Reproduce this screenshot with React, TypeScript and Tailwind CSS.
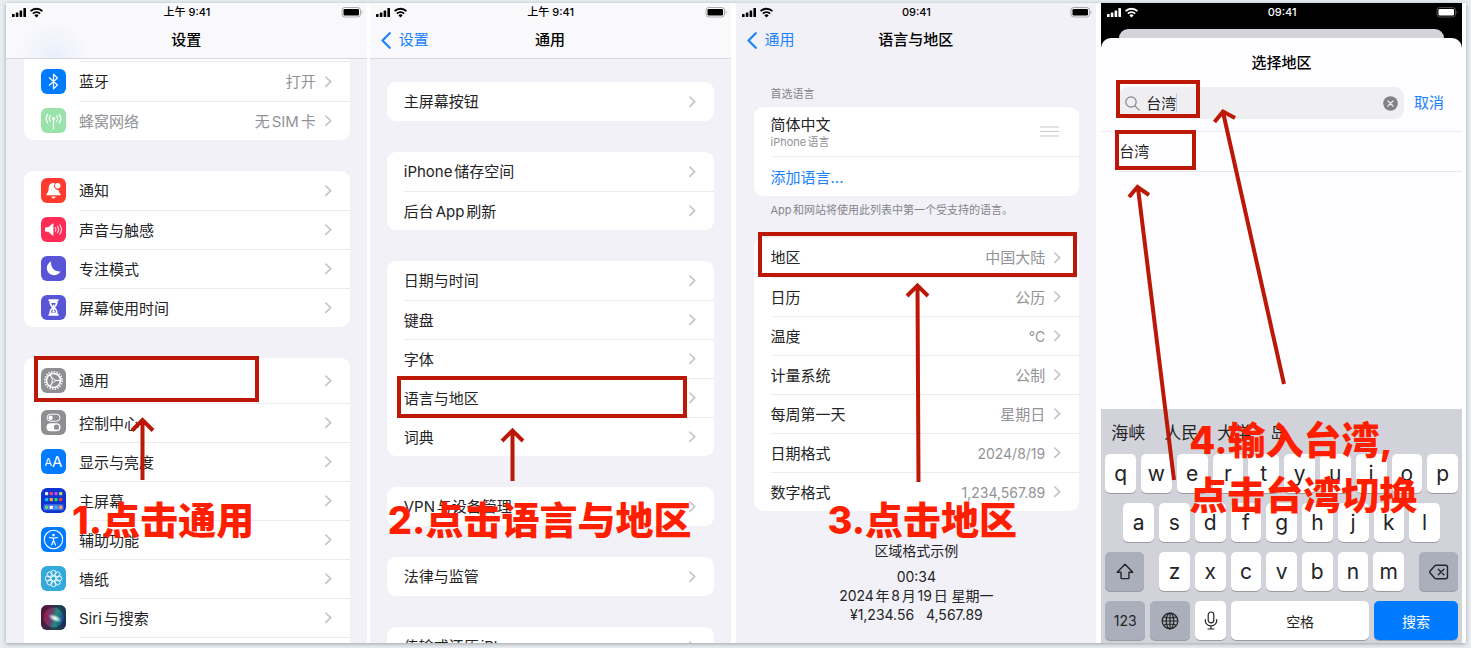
import type { ReactNode } from "react";

type RowData = {
  label: string;
  value?: string;
  icon?: ReactNode;
  muted?: boolean;
  tall?: boolean;
  numeric?: boolean;
};

const tile = "flex size-[25px] shrink-0 items-center justify-center rounded-[6px] text-white overflow-hidden";

function BluetoothIcon() {
  return (
    <span className={`${tile} bg-[#007aff]`}>
      <svg viewBox="0 0 25 25" className="size-full" fill="none" stroke="currentColor" strokeWidth="1.2">
        <path d="M8.3 8.8l8.200 7.200-4 3.800V5.200l4 3.800-8.200 7.200" strokeLinejoin="round" strokeLinecap="round" />
      </svg>
    </span>
  );
}

function CellularIcon() {
  return (
    <span className={`${tile} bg-[#99e3ab]`}>
      <svg viewBox="0 0 25 25" className="size-full" fill="none" stroke="currentColor" strokeWidth="1.2" strokeLinecap="round">
        <circle cx="12.5" cy="10.5" r="1.6" fill="currentColor" stroke="none" />
        <path d="M12.5 11v9.5M9.4 8a4 4 0 0 0 0 5.200M15.600 8a4 4 0 0 1 0 5.200M6.800 6.400a6.800 6.800 0 0 0 0 8.400M18.200 6.400a6.800 6.800 0 0 1 0 8.400" />
      </svg>
    </span>
  );
}

function BellIcon() {
  return (
    <span className={`${tile} bg-[#ff3b30]`}>
      <svg viewBox="0 0 25 25" className="size-full" fill="currentColor">
        <path d="M12.200 5c-3.200 0-4.400 2.400-4.500 5-.1 3-.7 4.300-2 5.700-.7.8-.4 1.600.6 1.600h12.400c1 0 1.300-.8.600-1.600-.9-1-1.500-2.200-1.800-3.800a4 4 0 0 1-3.600-6.500c-.5-.3-1.100-.4-1.700-.4z" />
        <circle cx="16.700" cy="7.800" r="2.700" />
        <path d="M10.500 18.600h4a2 2 0 0 1-4 0z" />
      </svg>
    </span>
  );
}

function SoundIcon() {
  return (
    <span className={`${tile} bg-[#ff2d55]`}>
      <svg viewBox="0 0 25 25" className="size-full" fill="currentColor">
        <path d="M4.800 10.200h2.500l4.200-3.600c.4-.3.9-.1.9.4v11c0 .5-.5.700-.9.400l-4.200-3.600H4.800a.7.700 0 0 1-.7-.7v-3.200c0-.4.300-.7.700-.7z" />
        <path d="M14.500 10.700a3.200 3.200 0 0 1 0 3.600M16.700 9.200a5.600 5.600 0 0 1 0 6.600M18.900 7.800a8.200 8.200 0 0 1 0 9.400" fill="none" stroke="currentColor" strokeWidth="1" strokeLinecap="round" />
      </svg>
    </span>
  );
}

function MoonIcon() {
  return (
    <span className={`${tile} bg-[#5856d6]`}>
      <svg viewBox="0 0 25 25" className="size-full" fill="currentColor">
        <path d="M10.200 5.400c-.9 5.600 2.700 10.200 9.200 10a7.200 7.200 0 1 1-9.200-10z" />
      </svg>
    </span>
  );
}

function HourglassIcon() {
  return (
    <span className={`${tile} bg-[#5856d6]`}>
      <svg viewBox="0 0 25 25" className="size-full" fill="currentColor">
        <path d="M7.500 4.200h10v1.800h-10zM7.500 19h10v1.800h-10z" />
        <path d="M8.300 6h8.400c0 3.600-1 4.900-2.600 6.500 1.600 1.600 2.600 2.900 2.600 6.500H8.300c0-3.600 1-4.900 2.600-6.500C9.300 10.900 8.300 9.600 8.300 6z" />
        <path d="M10.300 8h4.400c-.3 1.500-1 2.500-1.700 3.200v3c1.200.8 2 1.700 2.200 3.300H9.800c.2-1.600 1-2.500 2.200-3.300v-3c-.7-.7-1.400-1.700-1.700-3.200z" fill="#5856d6" />
        <path d="M12 9.500h1v6l1.300 1.500h-3.600l1.300-1.500z" />
      </svg>
    </span>
  );
}

function GearIcon() {
  return (
    <span className={`${tile} bg-[#8e8e93]`}>
      <svg viewBox="0 0 25 25" className="size-full" fill="none" stroke="currentColor">
        <circle cx="12.500" cy="12.500" r="8.700" strokeWidth="1.600" strokeDasharray="1.370 1.370" />
        <circle cx="12.500" cy="12.500" r="7" strokeWidth="1.600" />
        <circle cx="12.500" cy="12.500" r="1.600" strokeWidth="1" />
        <path d="M14.200 12.500h5M11.600 11L9.100 6.600M11.600 14l-2.500 4.400" strokeWidth="1.200" />
      </svg>
    </span>
  );
}

function ControlIcon() {
  return (
    <span className={`${tile} bg-[#8e8e93]`}>
      <svg viewBox="0 0 25 25" className="size-full" fill="none" stroke="currentColor">
        <rect x="6" y="4.200" width="13" height="7" rx="3.500" strokeWidth="1" />
        <circle cx="9.600" cy="7.700" r="2.200" fill="currentColor" stroke="none" />
        <rect x="5.500" y="13.200" width="14" height="8" rx="4" fill="currentColor" stroke="none" />
        <circle cx="15.500" cy="17.200" r="2.600" fill="#8e8e93" stroke="none" />
      </svg>
    </span>
  );
}

function DisplayIcon() {
  return (
    <span className={`${tile} bg-[#007aff] leading-[25px]`}>
      <span className="pt-[2px] text-[11px]">A</span>
      <span className="text-[15px]">A</span>
    </span>
  );
}

const homeDots = [
  ["#e8e8f0", "#ff3b6b", "#c04bff", "#b8e04a"],
  ["#20b8ff", "#ffb020", "#30d070", "#ff4030"],
  ["#50e080", "#ffffff", "#38b0ff", "#ff9a50"],
];

function HomeScreenIcon() {
  return (
    <span className={`${tile} bg-[#0a35d0]`}>
      <svg viewBox="0 0 25 25" className="size-full">
        <rect x="2.500" y="16.300" width="20" height="6" rx="1.500" fill="#4a70e4" />
        {homeDots.map((line, y) =>
          line.map((fill, x) => (
            <rect key={`${x}-${y}`} x={4 + x * 4.7} y={[4, 10, 17.7][y]} width="3.200" height="3.200" rx=".7" fill={fill} />
          )),
        )}
      </svg>
    </span>
  );
}

function AccessibilityIcon() {
  return (
    <span className={`${tile} bg-[#007aff]`}>
      <svg viewBox="0 0 25 25" className="size-full" fill="none" stroke="currentColor" strokeLinecap="round">
        <circle cx="12.500" cy="12.500" r="9.200" strokeWidth="1.100" />
        <circle cx="12.500" cy="8" r="1.300" fill="currentColor" stroke="none" />
        <path d="M8.500 10.500l4 .6 4-.6M12.500 11v3M10.600 18l1.600-4h.6l1.600 4" strokeWidth="1.200" strokeLinejoin="round" />
      </svg>
    </span>
  );
}

function WallpaperIcon() {
  return (
    <span className={`${tile} bg-[#34aadc]`}>
      <svg viewBox="0 0 25 25" className="size-full" fill="none" stroke="currentColor" strokeWidth=".9">
        <circle cx="12.500" cy="12.500" r="2.400" />
        {[0, 45, 90, 135, 180, 225, 270, 315].map((deg) => (
          <circle key={deg} cx="12.500" cy="6.900" r="2.600" transform={`rotate(${deg} 12.500 12.500)`} />
        ))}
      </svg>
    </span>
  );
}

function SiriIcon() {
  return (
    <span className={`${tile} bg-[#1b1a2e]`}>
      <svg viewBox="0 0 25 25" className="size-full">
        <defs>
          <linearGradient id="siri-a" x1="0" y1="0.300" x2="1" y2="0.500">
            <stop offset="0" stopColor="#a81048" />
            <stop offset=".4" stopColor="#6a3f70" />
            <stop offset=".65" stopColor="#1f8f78" />
            <stop offset="1" stopColor="#1a4c9a" />
          </linearGradient>
          <radialGradient id="siri-b">
            <stop offset="0" stopColor="#fff" />
            <stop offset=".4" stopColor="#fff" stopOpacity=".7" />
            <stop offset="1" stopColor="#cfe0ff" stopOpacity="0" />
          </radialGradient>
        </defs>
        <rect width="25" height="25" fill="url(#siri-a)" opacity=".4" />
        <circle cx="12.500" cy="12.500" r="10" fill="url(#siri-a)" />
        <ellipse cx="14" cy="13.200" rx="7.500" ry="3.500" fill="url(#siri-b)" transform="rotate(24 14 13)" />
      </svg>
    </span>
  );
}

const connectionRows: RowData[] = [
  { label: "蓝牙", value: "打开", icon: <BluetoothIcon /> },
  { label: "蜂窝网络", value: "无SIM卡", icon: <CellularIcon />, muted: true },
];

const alertRows: RowData[] = [
  { label: "通知", icon: <BellIcon /> },
  { label: "声音与触感", icon: <SoundIcon /> },
  { label: "专注模式", icon: <MoonIcon /> },
  { label: "屏幕使用时间", icon: <HourglassIcon /> },
];

const systemRows: RowData[] = [
  { label: "通用", icon: <GearIcon />, tall: true },
  { label: "控制中心", icon: <ControlIcon /> },
  { label: "显示与亮度", icon: <DisplayIcon /> },
  { label: "主屏幕", icon: <HomeScreenIcon /> },
  { label: "辅助功能", icon: <AccessibilityIcon /> },
  { label: "墙纸", icon: <WallpaperIcon /> },
  { label: "Siri与搜索", icon: <SiriIcon /> },
];

const generalGroups: RowData[][] = [
  [{ label: "主屏幕按钮" }],
  [{ label: "iPhone储存空间" }, { label: "后台App刷新" }],
  [{ label: "日期与时间" }, { label: "键盘" }, { label: "字体" }, { label: "语言与地区" }, { label: "词典" }],
  [{ label: "VPN与设备管理" }],
  [{ label: "法律与监管" }],
  [{ label: "传输或还原iPhone" }],
];

const regionRows: RowData[] = [
  { label: "地区", value: "中国大陆" },
  { label: "日历", value: "公历" },
  { label: "温度", value: "°C", numeric: true },
  { label: "计量系统", value: "公制" },
  { label: "每周第一天", value: "星期日" },
  { label: "日期格式", value: "2024/8/19", numeric: true },
  { label: "数字格式", value: "1,234,567.89", numeric: true },
];

function Chevron() {
  return (
    <svg viewBox="0 0 7 12" className="h-3 w-[7px] shrink-0" fill="none" stroke="#c4c4c8" strokeWidth="1.600">
      <path d="M.8 1l4.900 4.700L.8 10.400" strokeLinecap="round" strokeLinejoin="round" />
    </svg>
  );
}

function Row({ row, first }: { row: RowData; first: boolean }) {
  return (
    <li>
      <a href="#" className={`flex items-center gap-[13px] pl-[17px] ${row.tall ? "h-[45px]" : "h-[39px]"}`}>
        {row.icon}
        <span className={`flex h-full min-w-0 flex-1 items-center gap-[9px] pr-[18px] ${first ? "" : "border-t border-[#ebebef]"}`}>
          <span className={`flex-1 truncate pt-[2px] ${row.muted ? "text-[#929297]" : "text-[#242426]"}`}>{row.label}</span>
          {row.value && (
            <span className={`text-[#929297] ${row.numeric ? "text-[14px]" : "pt-[2px]"}`}>{row.value}</span>
          )}
          <Chevron />
        </span>
      </a>
    </li>
  );
}

function Rows({ rows }: { rows: RowData[] }) {
  return (
    <ul>
      {rows.map((row, i) => (
        <Row key={row.label} row={row} first={i === 0} />
      ))}
    </ul>
  );
}

function Group({ rows }: { rows: RowData[] }) {
  return (
    <div className="shrink-0 rounded-[9px] bg-white">
      <Rows rows={rows} />
    </div>
  );
}

function StatusBar({ time, light }: { time: string; light?: boolean }) {
  return (
    <div className={`grid h-[18px] shrink-0 grid-cols-[1fr_auto_1fr] items-center pr-1 pl-[5px] ${light ? "text-white" : "text-black"}`}>
      <svg viewBox="0 0 34 11" className="h-[11px] w-[34px]" fill="currentColor">
        <rect x="1" y="7" width="2.600" height="3" rx=".6" />
        <rect x="4.800" y="5.400" width="2.600" height="4.600" rx=".6" />
        <rect x="8.600" y="3.400" width="2.600" height="6.600" rx=".6" />
        <rect x="12.400" y="1" width="2.600" height="9" rx=".6" />
        <g fill="none" stroke="currentColor" strokeWidth="1.900">
          <path d="M19.600 4.200a8.200 8.200 0 0 1 11.800 0" />
          <path d="M21.900 6.700a5 5 0 0 1 7.200 0" />
        </g>
        <path d="M25.500 10.600l-2.100-2.200a3 3 0 0 1 4.200 0z" />
      </svg>
      <span className="text-center text-[11px] leading-none font-medium">{time}</span>
      <svg viewBox="0 0 22 11" className="h-[11px] w-[22px] justify-self-end" fill="currentColor">
        <rect x="1" y=".5" width="18.500" height="9.500" rx="2.800" fill="none" stroke="currentColor" opacity=".3" />
        <rect x="2.500" y="2" width="15.500" height="6.500" rx="1.300" />
        <path d="M20.700 3.700v3.200c1-.4 1-2.800 0-3.200z" opacity=".4" />
      </svg>
    </div>
  );
}

function NavBar({ title, back }: { title: string; back?: string }) {
  return (
    <div className="grid h-[37px] shrink-0 grid-cols-[1fr_auto_1fr] items-center px-[11px] pt-[2px]">
      {back ? (
        <a href="#" className="flex items-center gap-2 text-[#1a83fb]">
          <svg viewBox="0 0 10 17" className="h-[17px] w-[10px]" fill="none" stroke="currentColor" strokeWidth="2.200">
            <path d="M8.800 1.200L1.500 8.500l7.300 7.300" strokeLinecap="round" strokeLinejoin="round" />
          </svg>
          {back}
        </a>
      ) : (
        <span />
      )}
      <h2 className="font-medium text-black">{title}</h2>
    </div>
  );
}

function Marks({ children }: { children: ReactNode }) {
  return (
    <svg className="pointer-events-none absolute inset-0 size-full" fill="none" stroke="#bb1807" strokeWidth="4">
      {children}
    </svg>
  );
}

const caption = "pointer-events-none absolute whitespace-nowrap text-[38px] leading-[55px] font-extrabold text-[#ff1f00]";

const phone = "relative flex min-w-0 flex-1 flex-col overflow-hidden";

function SettingsPhone() {
  return (
    <section className={`${phone} mr-[3px] bg-[#f2f1f7]`}>
      <header className="shrink-0 border-b border-[#d9d8de] bg-[#f9f8fb] bg-[radial-gradient(circle_at_48px_54px,#e8f0fc,transparent_34px)]">
        <StatusBar time="上午 9:41" />
        <NavBar title="设置" />
      </header>
      <main className="flex min-h-0 flex-1 flex-col gap-[31px] pr-[17px] pl-[18px]">
        <div className="shrink-0 rounded-b-[9px] bg-white pt-[2px]">
          <div className="ml-[55px] h-px bg-[#ebebef]" />
          <Rows rows={connectionRows} />
        </div>
        <Group rows={alertRows} />
        <div className="flex-1 rounded-t-[9px] bg-white">
          <Rows rows={systemRows} />
          <div className="ml-[55px] h-px bg-[#ebebef]" />
        </div>
      </main>
      <Marks>
        <rect x="30" y="355" width="221" height="42" />
        <path d="M136.500 477V418M126 427.500L136.500 417l10.500 10.500" />
      </Marks>
      <p className={`${caption} top-[490px] left-[66px]`}>1.点击通用</p>
    </section>
  );
}

function GeneralPhone() {
  return (
    <section className={`${phone} mr-[5px] bg-[#f2f1f7]`}>
      <header className="shrink-0 border-b border-[#d9d8de] bg-[#f9f8fb]">
        <StatusBar time="上午 9:41" />
        <NavBar title="通用" back="设置" />
      </header>
      <main className="flex min-h-0 flex-1 flex-col gap-[31px] px-[17px] pt-[23px]">
        {generalGroups.map((rows) => (
          <Group key={rows[0].label} rows={rows} />
        ))}
      </main>
      <Marks>
        <rect x="29" y="375" width="286" height="38" />
        <path d="M142.500 478V428M132 438l10.500-10.500L153 438" />
      </Marks>
      <p className={`${caption} top-[490px] left-[18px]`}>2.点击语言与地区</p>
    </section>
  );
}

function LanguagePhone() {
  return (
    <section className={`${phone} mr-[5px] bg-[#f2f1f7]`}>
      <header className="shrink-0">
        <StatusBar time="09:41" />
        <NavBar title="语言与地区" back="通用" />
      </header>
      <main className="flex min-h-0 flex-1 flex-col pt-7 pr-[17px] pl-[18px]">
        <h3 className="pb-[5px] pl-[17px] text-[11px] leading-4 text-[#85858b]">首选语言</h3>
        <div className="shrink-0 rounded-[9px] bg-white pl-[17px]">
          <div className="flex h-[49px] items-center justify-between pr-5">
            <div>
              <div className="leading-5 text-[#242426]">简体中文</div>
              <div className="text-[11px] leading-[14px] text-[#929297]">iPhone语言</div>
            </div>
            <svg viewBox="0 0 19 11" className="h-[11px] w-[19px]" stroke="#c9c9cd" strokeWidth="1.200">
              <path d="M0 1h19M0 5.500h19M0 10h19" />
            </svg>
          </div>
          <a href="#" className="flex h-10 items-center border-t border-[#ebebef] pt-[3px] text-[#1a83fb]">添加语言...</a>
        </div>
        <p className="pt-[6px] pb-5 pl-[17px] text-[11px] leading-4 text-[#85858b]">App和网站将使用此列表中第一个受支持的语言。</p>
        <Group rows={regionRows} />
        <div className="pt-[30px] text-center text-[14px] leading-[19px] text-[#242426]">
          <p className="pb-[7px]">区域格式示例</p>
          <p>00:34</p>
          <p>2024年8月19日 星期一</p>
          <p>¥1,234.56 &nbsp; 4,567.89</p>
        </div>
      </main>
      <Marks>
        <rect x="24" y="231" width="315" height="41" />
        <path d="M182.500 479L181.500 283M171 293l10.500-10.500L192 293" />
      </Marks>
      <p className={`${caption} top-[490px] left-[92px]`}>3.点击地区</p>
    </section>
  );
}

const keyBase = "flex h-[39px] items-center justify-center rounded-[5px] shadow-[0_1px_0_#9b9ca1]";
const letterKey = `${keyBase} min-w-0 flex-1 bg-white text-[21px] leading-none text-[#242426]`;
const darkKey = `${keyBase} shrink-0 bg-[#abafbb] text-[14px] text-[#242426]`;

function Keys({ letters }: { letters: string }) {
  return (
    <>
      {letters.split("").map((l) => (
        <button key={l} className={letterKey}>{l}</button>
      ))}
    </>
  );
}

function Keyboard() {
  return (
    <div className="shrink-0 bg-[#d2d3da] px-1 pb-[3px]">
      <div className="flex h-[45px] items-center gap-[19px] pt-[5px] pl-[6px] text-[17px] text-[#242426]">
        <button>海峡</button>
        <button>人民</button>
        <button>大学</button>
        <button>岛</button>
      </div>
      <div className="flex flex-col gap-[10px]">
        <div className="flex gap-[5px]">
          <Keys letters="qwertyuiop" />
        </div>
        <div className="flex gap-[5px] px-[18px]">
          <Keys letters="asdfghjkl" />
        </div>
        <div className="flex gap-[15px]">
          <button aria-label="shift" className={`${darkKey} w-[39px]`}>
            <svg viewBox="0 0 18 17" className="h-[17px] w-[18px]" fill="none" stroke="currentColor" strokeWidth="1.400" strokeLinejoin="round">
              <path d="M9 1.200L1.200 9.200H5v5.600c0 .5.300.8.800.8h6.400c.5 0 .8-.3.800-.8V9.200h3.800z" />
            </svg>
          </button>
          <div className="flex min-w-0 flex-1 gap-[5px]">
            <Keys letters="zxcvbnm" />
          </div>
          <button aria-label="delete" className={`${darkKey} w-[39px]`}>
            <svg viewBox="0 0 20 16" className="h-4 w-5" fill="none" stroke="currentColor" strokeWidth="1.400" strokeLinejoin="round" strokeLinecap="round">
              <path d="M7 1.200h9.500c1.200 0 2 .8 2 2v9.600c0 1.200-.8 2-2 2H7c-.5 0-.9-.2-1.200-.5L1 8.700a1 1 0 0 1 0-1.400l4.800-5.600c.3-.3.700-.5 1.200-.5z" />
              <path d="M9.300 5.200l5.600 5.600M14.900 5.200l-5.600 5.600" />
            </svg>
          </button>
        </div>
        <div className="flex gap-[5px]">
          <button className={`${darkKey} w-10`}>123</button>
          <button aria-label="切换键盘" className={`${darkKey} w-10`}>
            <svg viewBox="0 0 18 18" className="size-[18px]" fill="none" stroke="currentColor" strokeWidth="1.200">
              <circle cx="9" cy="9" r="7.800" />
              <ellipse cx="9" cy="9" rx="3.800" ry="7.800" />
              <path d="M9 1v16M1 9h16M2.500 4.800c3.500 1.600 9.500 1.600 13 0M2.500 13.200c3.500-1.600 9.500-1.600 13 0" />
            </svg>
          </button>
          <button aria-label="听写" className={`${keyBase} w-[31px] shrink-0 bg-white text-[#242426]`}>
            <svg viewBox="0 0 14 19" className="h-[19px] w-[14px]" fill="none" stroke="currentColor" strokeWidth="1.200" strokeLinecap="round">
              <rect x="4.200" y="1" width="5.600" height="10.800" rx="2.800" />
              <path d="M1.300 8.500v1.200a5.700 5.200 0 0 0 11.400 0V8.500M7 15v3M4 18h6" />
            </svg>
          </button>
          <button className={`${keyBase} flex-1 bg-white pt-[2px] text-[14px] text-[#242426]`}>空格</button>
          <button className={`${keyBase} w-[84px] shrink-0 bg-[#007aff] pt-[2px] text-[14px] text-white`}>搜索</button>
        </div>
      </div>
    </div>
  );
}

function PickerPhone() {
  return (
    <section className={`${phone} mr-1 bg-black`}>
      <StatusBar time="09:41" light />
      <div className="mx-[18px] mt-2 h-[9px] shrink-0 rounded-t-[9px] bg-[#d5d4da]" />
      <main className="flex min-h-0 flex-1 flex-col rounded-t-[10px] bg-[#fefdff]">
        <h2 className="pt-3 text-center leading-[26px] font-medium text-black">选择地区</h2>
        <div className="mt-[11px] flex h-8 shrink-0 items-center gap-[10px] px-[18px]">
          <label className="flex h-full min-w-0 flex-1 items-center gap-[6px] rounded-[9px] bg-[#efeef1] px-[6px]">
            <svg viewBox="0 0 15 15" className="size-[15px] shrink-0" fill="none" stroke="#85858a" strokeWidth="1.200" strokeLinecap="round">
              <circle cx="6" cy="6" r="5.200" />
              <path d="M9.900 9.900l4.300 4.300" />
            </svg>
            <input aria-label="搜索" defaultValue="台湾" className="min-w-0 flex-1 bg-transparent pt-[2px] text-[15px] text-[#242426] outline-none" />
            <svg viewBox="0 0 15 15" className="size-[15px] shrink-0">
              <circle cx="7.500" cy="7.500" r="7.300" fill="#808085" />
              <path d="M5 5l5 5M10 5l-5 5" stroke="#efeef1" strokeWidth="1.300" strokeLinecap="round" />
            </svg>
          </label>
          <button className="text-[#1a83fb]">取消</button>
        </div>
        <ul className="mt-3 border-t border-[#ebebef] pl-[18px]">
          <li className="flex h-10 items-center border-b border-[#e6e5ea] pt-[2px] text-[#242426]">台湾</li>
        </ul>
      </main>
      <Keyboard />
      <span className="absolute top-[90px] left-[75px] h-[19px] w-px bg-[#c3c6ee]" />
      <Marks>
        <rect x="17" y="79" width="80" height="34" />
        <rect x="16" y="129" width="77" height="36" />
        <path d="M183 381L122 109M113.500 119L122 108.500l12 6.500" />
        <path d="M73 477L37 185M28 194l8.500-10L48 192" />
      </Marks>
      <p className={`${caption} top-[410px] left-[88px]`}>
        4.输入台湾,
        <br />
        点击台湾切换
      </p>
    </section>
  );
}

export default function App() {
  return (
    <div className="h-screen min-h-[648px] bg-[#e8edf1] pt-[3px] pr-[5px] pb-[5px] pl-[6px] font-[Inter,'Noto_Sans_CJK_SC',sans-serif] text-[15px] [text-autospace:normal]">
      <div className="flex h-full bg-white shadow-[0_1px_4px_#9aa0a5]">
        <SettingsPhone />
        <GeneralPhone />
        <LanguagePhone />
        <PickerPhone />
      </div>
    </div>
  );
}
